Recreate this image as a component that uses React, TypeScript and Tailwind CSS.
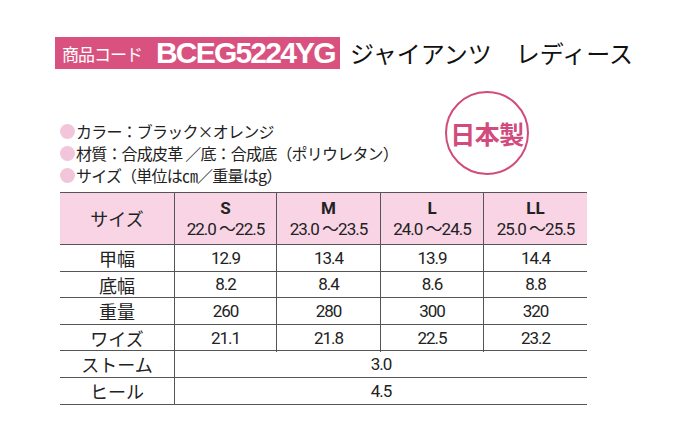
import React from "react";

const jp = { fontFamily: "'Noto Sans CJK JP', 'Noto Sans', sans-serif" };
const num = { fontFamily: "'Roboto', 'Noto Sans CJK JP', sans-serif" };

const sizes = [
  { s: "S", r: "22.0 ～22.5" },
  { s: "M", r: "23.0 ～23.5" },
  { s: "L", r: "24.0 ～24.5" },
  { s: "LL", r: "25.0 ～25.5" },
];

const rows: [string, string[]][] = [
  ["甲幅", ["12.9", "13.4", "13.9", "14.4"]],
  ["底幅", ["8.2", "8.4", "8.6", "8.8"]],
  ["重量", ["260", "280", "300", "320"]],
  ["ワイズ", ["21.1", "21.8", "22.5", "23.2"]],
];

const spans: [string, string][] = [
  ["ストーム", "3.0"],
  ["ヒール", "4.5"],
];

export default function App() {
  return (
    <div className="w-[685px] h-[442px] bg-white text-[#222] overflow-hidden" style={jp}>
      <div className="pt-[37px] pl-[55px] flex items-center">
        <div className="h-[32px] w-[285px] shrink-0 bg-[#d9527f] text-white flex items-center pl-[7px] whitespace-nowrap">
          <span className="text-[17px] leading-none tracking-[-1px]">商品コード</span>
          <span
            className="ml-[14px] text-[30px] font-bold leading-none tracking-[-1.8px]"
            style={{ fontFamily: "'Liberation Sans', Arial, sans-serif" }}
          >
            BCEG5224YG
          </span>
        </div>
        <div className="ml-[10px] text-[24px] leading-none text-[#111] whitespace-nowrap">ジャイアンツ　レディース</div>
      </div>

      <div className="mt-[22px] flex">
        <div className="pl-[60px] pt-[29px] w-[387px] shrink-0 text-[16px] leading-[22px] tracking-[-0.8px] whitespace-nowrap">
          {["カラー：ブラック×オレンジ", "材質：合成皮革 ／底：合成底（ポリウレタン）", "サイズ（単位は㎝／重量はg）"].map((t) => (
            <div key={t} className="flex items-center">
              <span className="w-[15px] h-[15px] rounded-full bg-[#f3c5da] mr-[1px] shrink-0" />
              <span>{t}</span>
            </div>
          ))}
        </div>
        <div className="ml-[58px] w-[84px] h-[84px] shrink-0 rounded-full border-2 border-[#d24b7d] flex items-center justify-center text-[#d24b7d] text-[25px] font-bold leading-none tracking-[-0.5px]">
          日本製
        </div>
      </div>

      <div className="ml-[60px] mt-[6px] w-[527px] text-[16px]">
        <div className="grid grid-cols-[115px_102px_104px_103px_103px] bg-[#f8d4e5] border-t-[1.5px] border-b-[1.5px] border-[#555] h-[53px]">
          <div className="flex items-center justify-center text-[18px] border-r-[1.5px] border-[#555]">サイズ</div>
          {sizes.map((z, i) => (
            <div
              key={z.s}
              className={`flex flex-col items-center justify-center ${i < 3 ? "border-r-[1.5px] border-[#555]" : ""}`}
            >
              <span className="text-[17px] font-bold leading-[20px]" style={num}>{z.s}</span>
              <span className="text-[17px] leading-[22px] tracking-[-1px]" style={num}>{z.r}</span>
            </div>
          ))}
        </div>
        {rows.map(([label, vals]) => (
          <div key={label} className="grid grid-cols-[115px_102px_104px_103px_103px] border-b-[1.5px] border-[#555] h-[26.6px]">
            <div className="flex items-center justify-center text-[18px] border-r-[1.5px] border-[#555]">{label}</div>
            {vals.map((v, i) => (
              <div
                key={i}
                className={`flex items-center justify-center text-[17px] tracking-[-1px] ${i < 3 ? "border-r-[1.5px] border-[#555]" : ""}`}
                style={num}
              >
                {v}
              </div>
            ))}
          </div>
        ))}
        {spans.map(([label, v]) => (
          <div key={label} className="grid grid-cols-[115px_412px] border-b-[1.5px] border-[#555] h-[26.6px]">
            <div className="flex items-center justify-center text-[18px] border-r-[1.5px] border-[#555]">{label}</div>
            <div className="flex items-center justify-center text-[17px] tracking-[-1px]" style={num}>{v}</div>
          </div>
        ))}
      </div>
    </div>
  );
}
